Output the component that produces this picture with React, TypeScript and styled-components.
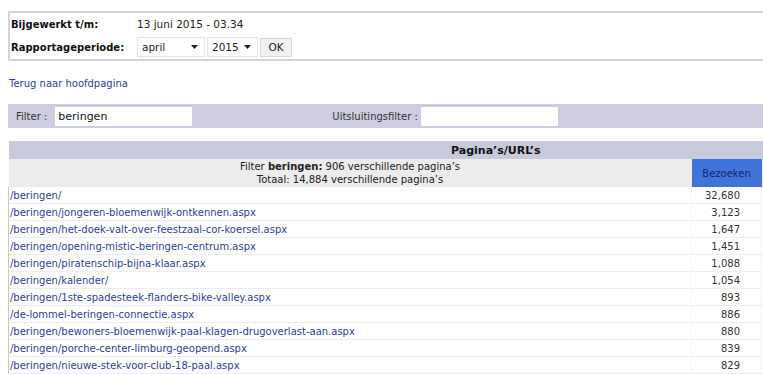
import React from "react";
import styled, { createGlobalStyle } from "styled-components";

const Global = createGlobalStyle`
  html, body { margin: 0; padding: 0; overflow: hidden; background: #fff; }
  body { padding: 11px 0 0 8px; font-family: "DejaVu Sans", Verdana, sans-serif; font-size: 10px; color: #222; }
`;

const Page = styled.div`
  width: 975px;
`;

const InfoBox = styled.div`
  border: 2px solid #d4d4dc;
  border-right: none;
  display: grid;
  grid-template-columns: 126px 1fr;
  grid-template-rows: 22px 24px;
  align-items: center;
  padding: 0 0 0 1px;
`;

const Label = styled.div`
  font-weight: bold;
  font-size: 10px;
  color: #111;
`;

const Value = styled.div`
  font-size: 10.5px;
  color: #222;
  display: flex;
  align-items: center;
  gap: 2px;
`;

const SelectBox = styled.div<{ $w: number }>`
  position: relative;
  width: ${(p) => p.$w}px;
  height: 20px;
  box-sizing: border-box;
  border: 1px solid #e2e2e2;
  background: #fff;
  display: flex;
  align-items: center;
  padding-left: 4px;
  font-size: 10.5px;
  color: #222;
`;

const Arrow = styled.svg`
  position: absolute;
  right: 6px;
  top: 7px;
`;

const OkButton = styled.div`
  height: 19px;
  width: 32px;
  box-sizing: border-box;
  border: 1px solid #d6d6d6;
  background: #f1f1f1;
  display: flex;
  align-items: center;
  justify-content: center;
  font-size: 10.5px;
  color: #222;
`;

const BackLink = styled.a`
  display: block;
  margin: 16px 0 0 1px;
  height: 13px;
  line-height: 13px;
  color: #2f3d98;
  text-decoration: none;
  font-size: 10px;
`;

const FilterBar = styled.div`
  margin-top: 14px;
  height: 24px;
  background: #cdcddf;
  display: flex;
  align-items: center;
  padding-left: 8px;
`;

const FilterLabel = styled.span<{ $ml?: number; $mr?: number }>`
  margin-left: ${(p) => p.$ml ?? 0}px;
  margin-right: ${(p) => p.$mr ?? 8}px;
  color: #333;
  font-size: 10px;
`;

const FilterInput = styled.div`
  width: 137px;
  height: 19px;
  background: #fff;
  display: flex;
  align-items: center;
  padding-left: 3px;
  box-sizing: border-box;
  font-size: 11px;
  color: #111;
`;

const Table = styled.table`
  margin-top: 13px;
  border-collapse: collapse;
  width: 975px;
`;

const TitleCell = styled.th`
  background: #c9c9dc;
  height: 18px;
  padding: 0;
  font-size: 11px;
  font-weight: bold;
  color: #111;
  text-align: center;
`;

const SubCell = styled.td<{ $w?: number }>`
  background: #ececec;
  width: ${(p) => (p.$w ? `${p.$w}px` : "auto")};
  height: 28px;
  padding: 0;
  text-align: center;
  font-size: 10px;
  line-height: 13px;
  color: #222;
`;

const SortCell = styled.td`
  background: #3f74da;
  width: 70px;
  height: 28px;
  padding: 0;
  text-align: center;
  font-size: 10px;
  color: #16256a;
`;

const Row = styled.tr`
  border-bottom: 1px solid #ededed;
`;

const UrlCell = styled.td`
  height: 16px;
  padding: 0 0 0 1px;
  border-left: 1px solid #c8c8c8;
  font-size: 10px;
  white-space: nowrap;
  text-align: left;
`;

const UrlLink = styled.a`
  color: #2f3d98;
  text-decoration: none;
`;

const NumCell = styled.td`
  height: 16px;
  padding: 0 21px 0 0;
  text-align: right;
  font-size: 10px;
  color: #333;
  border-left: 1px solid #f3f3f3;
`;

const ExtraCell = styled.td`
  border-left: 1px solid #f6f3e6;
`;

const rows: [string, string][] = [
  ["/beringen/", "32,680"],
  ["/beringen/jongeren-bloemenwijk-ontkennen.aspx", "3,123"],
  ["/beringen/het-doek-valt-over-feestzaal-cor-koersel.aspx", "1,647"],
  ["/beringen/opening-mistic-beringen-centrum.aspx", "1,451"],
  ["/beringen/piratenschip-bijna-klaar.aspx", "1,088"],
  ["/beringen/kalender/", "1,054"],
  ["/beringen/1ste-spadesteek-flanders-bike-valley.aspx", "893"],
  ["/de-lommel-beringen-connectie.aspx", "886"],
  ["/beringen/bewoners-bloemenwijk-paal-klagen-drugoverlast-aan.aspx", "880"],
  ["/beringen/porche-center-limburg-geopend.aspx", "839"],
  ["/beringen/nieuwe-stek-voor-club-18-paal.aspx", "829"],
];

const Caret = () => (
  <Arrow width="7" height="4" viewBox="0 0 7 4">
    <path d="M0 0 L7 0 L3.5 4 Z" fill="#222" />
  </Arrow>
);

export default function App() {
  return (
    <Page>
      <Global />
      <InfoBox>
        <Label>Bijgewerkt t/m:</Label>
        <Value>13 juni 2015 - 03.34</Value>
        <Label>Rapportageperiode:</Label>
        <Value>
          <SelectBox $w={68}>
            april
            <Caret />
          </SelectBox>
          <SelectBox $w={51}>
            2015
            <Caret />
          </SelectBox>
          <OkButton>OK</OkButton>
        </Value>
      </InfoBox>
      <BackLink href="#">Terug naar hoofdpagina</BackLink>
      <FilterBar>
        <FilterLabel>Filter :</FilterLabel>
        <FilterInput>beringen</FilterInput>
        <FilterLabel $ml={140} $mr={3}>
          Uitsluitingsfilter :
        </FilterLabel>
        <FilterInput />
      </FilterBar>
      <Table>
        <thead>
          <tr>
            <TitleCell colSpan={3}>Pagina’s/URL’s</TitleCell>
          </tr>
          <tr>
            <SubCell $w={683}>
              Filter <b>beringen:</b> 906 verschillende pagina’s
              <br />
              Totaal: 14,884 verschillende pagina’s
            </SubCell>
            <SortCell>Bezoeken</SortCell>
            <SubCell />
          </tr>
        </thead>
        <tbody>
          {rows.map(([url, n]) => (
            <Row key={url}>
              <UrlCell>
                <UrlLink href="#">{url}</UrlLink>
              </UrlCell>
              <NumCell>{n}</NumCell>
              <ExtraCell />
            </Row>
          ))}
        </tbody>
      </Table>
    </Page>
  );
}
